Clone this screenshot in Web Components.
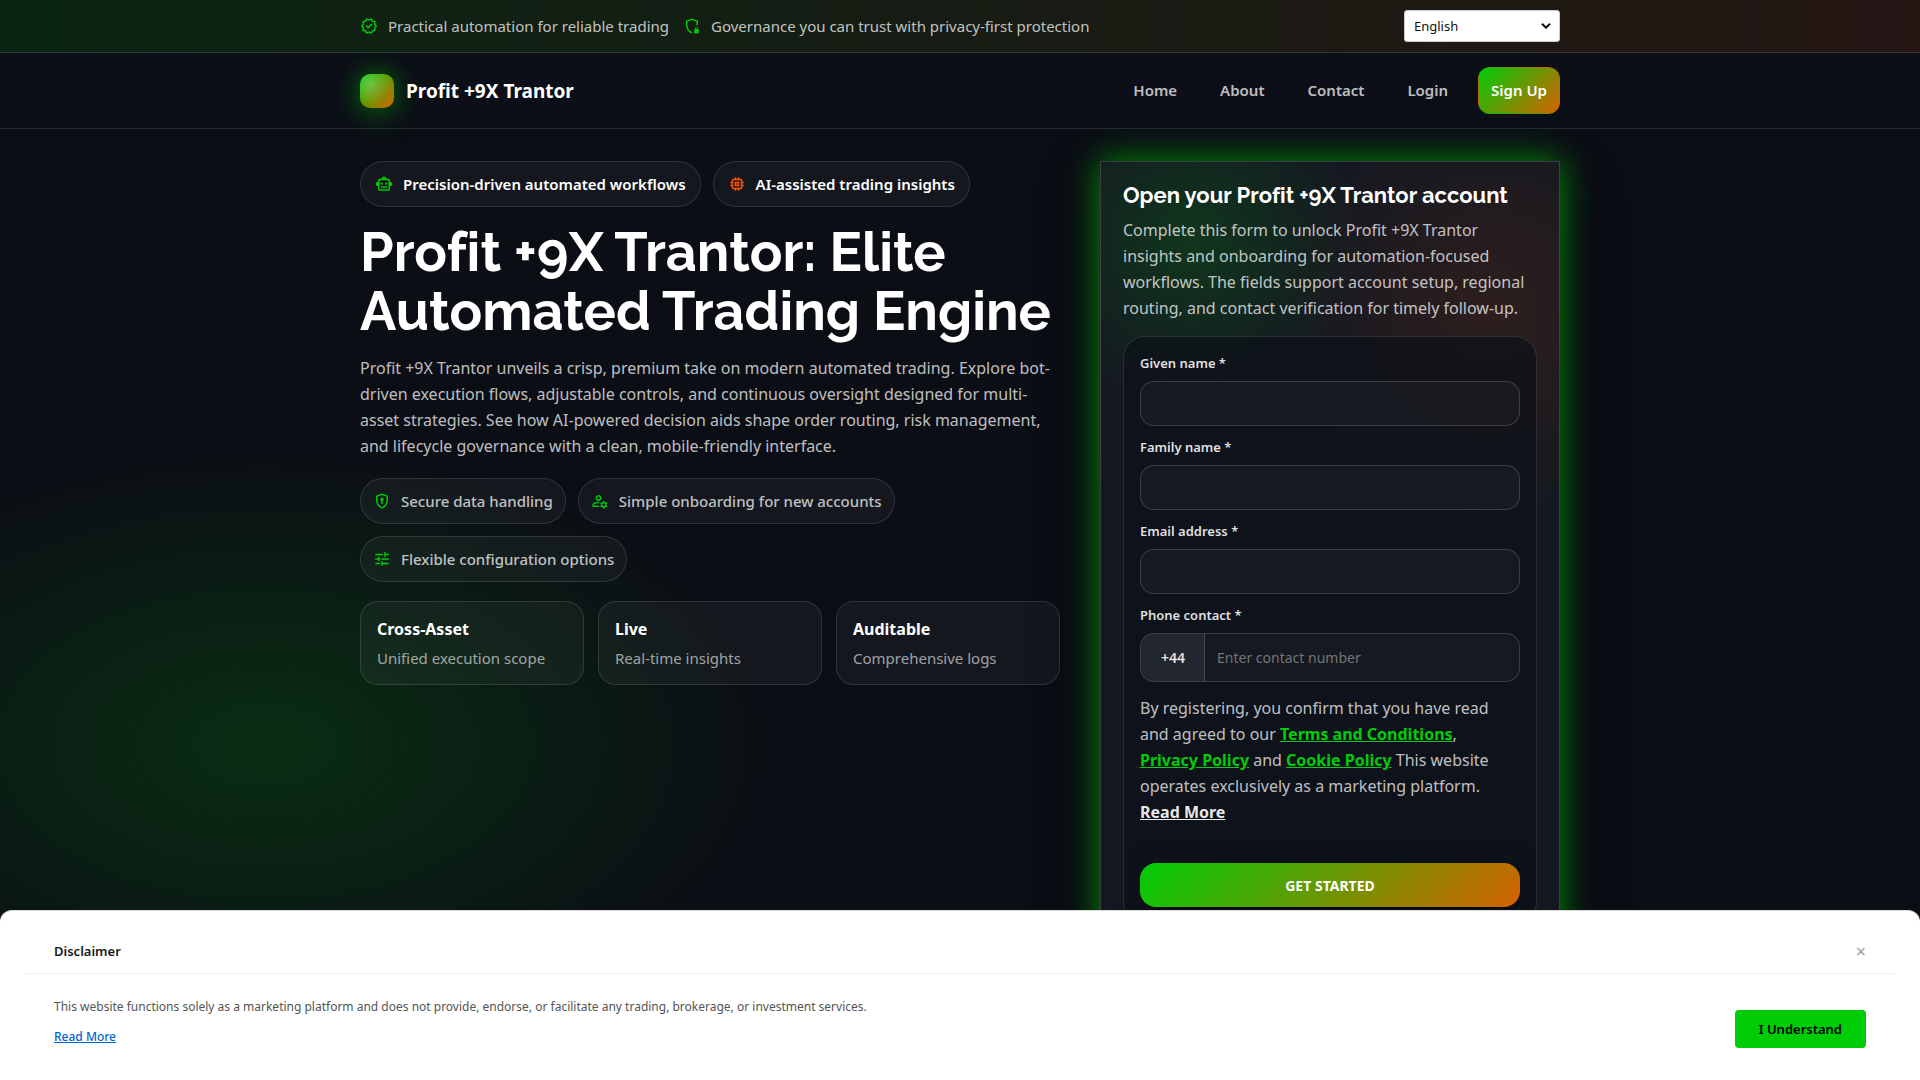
<!DOCTYPE html>
<html lang="en">
<head>
<meta charset="utf-8">
<title>Profit +9X Trantor</title>
<style>
  :root {
    --green: #00cc07;
    --orange: #ff5200;
    --grad: linear-gradient(135deg, #00cc07, #d46200);
    --line: rgba(255, 255, 255, .12);
    --panel: rgba(255, 255, 255, .04);
    --text: rgba(255, 255, 255, .74);
    --heading: Raleway, Lato, sans-serif;
  }
  * { box-sizing: border-box; }
  body {
    margin: 0;
    min-height: 100vh;
    overflow: hidden;
    background: #0b0e15;
    color: var(--text);
    font: 16px/26px "Noto Sans", sans-serif;
  }
</style>
</head>
<body>
<page-app></page-app>

<script>
const base = /*css*/`
  * { box-sizing: border-box; }
  a { color: inherit; text-decoration: none; }
  h1, h2, p { margin: 0; }
`

const icons = {
  verified: '<path d="m8.6 22.5-1.9-3.2-3.6-.8.35-3.7L1 12l2.45-2.8L3.1 5.5l3.6-.8 1.9-3.2L12 2.950l3.400-1.450 1.900 3.200 3.600.8-.35 3.700L23 12l-2.450 2.800.35 3.700-3.600.8-1.900 3.200-3.400-1.450Zm.85-2.550 2.550-1.100 2.600 1.100 1.400-2.400 2.750-.65-.25-2.800 1.850-2.100-1.850-2.150.25-2.800-2.750-.6-1.450-2.400L12 5.150l-2.600-1.100L8 6.450l-2.750.6.25 2.800L3.650 12l1.850 2.100-.25 2.850 2.750.6Zm1.500-4.400L16.600 9.900l-1.400-1.450-4.250 4.250-2.150-2.100L7.400 12Z"/>',
  shieldLock: '<path d="M12 22q-3.475-.875-5.737-3.988T4 11.100V5l8-3 8 3v6h-2V6.375l-6-2.250-6 2.250V11.100q0 3.025 1.700 5.500T12 19.900Zm4 0q-.425 0-.712-.288T15 21v-4q0-.425.288-.712T16 16v-1q0-.825.588-1.412T18 13t1.413.588T20 15v1q.425 0 .713.288T21 17v4q0 .425-.287.713T20 22Zm1-6h2v-1q0-.425-.287-.712T18 14t-.712.288T17 15Z"/>',
  robot: '<path d="M4 15q-1.250 0-2.125-.875T1 12t.875-2.125T4 9V7q0-.825.588-1.412T6 5h3q0-1.250.875-2.125T12 2t2.125.875T15 5h3q.825 0 1.413.588T20 7v2q1.250 0 2.125.875T23 12t-.875 2.125T20 15v4q0 .825-.587 1.413T18 21H6q-.825 0-1.412-.587T4 19ZM6 19h12V7H6Zm3-6q-.625 0-1.062-.437T7.500 11.500t.438-1.062T9 10t1.063.438.437 1.062-.437 1.063T9 13Zm6 0q-.625 0-1.062-.437T13.500 11.500t.438-1.062T15 10t1.063.438.437 1.062-.437 1.063T15 13Zm-7 4v-2h8v2Z"/>',
  chip: '<path d="M9 15V9h6v6Zm2-2h2v-2h-2Zm-2 8v-2H7q-.825 0-1.412-.587T5 17v-2H3v-2h2v-2H3V9h2V7q0-.825.588-1.412T7 5h2V3h2v2h2V3h2v2h2q.825 0 1.413.588T19 7v2h2v2h-2v2h2v2h-2v2q0 .825-.587 1.413T17 19h-2v2h-2v-2h-2v2Zm8-4V7H7v10Z"/>',
  shieldKey: '<path d="M12 22q-3.475-.875-5.737-3.988T4 11.100V5l8-3 8 3v6.100q0 3.800-2.262 6.913T12 22Zm0-2.100q2.600-.825 4.300-3.300t1.700-5.500V6.375l-6-2.250-6 2.250V11.100q0 3.025 1.700 5.500t4.300 3.300ZM11 16v-4.300A2.200 2.200 0 1 1 13 11.700V16Z"/>',
  userCog: '<path d="M10 12q-1.650 0-2.825-1.175T6 8t1.175-2.825T10 4t2.825 1.175T14 8t-1.175 2.825T10 12Zm-8 8v-2.800q0-.85.425-1.562T3.600 14.550Q5.100 13.800 6.888 13.400T10 13h.700q-.4 1-.55 2H10q-1.750 0-3.150.437T4.500 16.350Q4 16.650 4 17.200v.8h6.300q.2 1 .8 2Zm8-10q.825 0 1.413-.587T12 8t-.587-1.412T10 6t-1.412.588T8 8t.588 1.413T10 10Zm6 12-.3-1.500q-.6-.25-1-.55l-1.450.45-1-1.700L13.400 17.700q-.1-.6 0-1.300l-1.150-1 1-1.700 1.450.45q.5-.4 1-.55L16 12h2l.3 1.600q.5.200 1 .55l1.450-.45 1 1.750-1.150 1q.1.600 0 1.250l1.150 1-1 1.700-1.450-.45q-.4.300-1 .55L18 22Zm1-3q.825 0 1.413-.587T19 17t-.587-1.412T17 15t-1.412.588T15 17t.588 1.413T17 19Z"/>',
  tune: '<path d="M11 21v-6h2v2h8v2h-8v2Zm-8-2v-2h6v2Zm4-4v-2H3v-2h4V9h2v6Zm4-2v-2h10v2Zm4-4V3h2v2h4v2h-4v2ZM3 7V5h10v2Z"/>'
}

function define(name, css, html) {
  customElements.define(name, class extends HTMLElement {
    constructor() {
      super()
      this.attachShadow({ mode: 'open' })
      this.shadowRoot.innerHTML = `<style>${base}${css}</style>${typeof html === 'function' ? html(this) : html}`
    }
  })
}

define('app-icon', /*css*/`
  :host { display: block; flex: none; width: 18px; height: 18px; color: var(--green); }
  svg { display: block; width: 100%; height: 100%; fill: currentColor; }
`, el => `<svg viewBox="0 0 24 24" aria-hidden="true">${icons[el.getAttribute('name')]}</svg>`)

define('language-select', /*css*/`
  :host { display: grid; align-items: center; width: 156px; }
  select, svg { grid-area: 1 / 1; }
  select {
    width: 100%; height: 32px; padding: 0 9px; appearance: none;
    border: 1px solid #ccc; border-radius: 3px;
    background: #fff; color: #111; font: 13px "Noto Sans", sans-serif;
  }
  svg {
    justify-self: end; width: 10px; height: 6px; margin-right: 9px;
    fill: none; stroke: #111; stroke-width: 2; pointer-events: none;
  }
`, /*html*/`
  <select aria-label="Language"><option>English</option></select>
  <svg viewBox="0 0 10 6" aria-hidden="true"><path d="m1 .7 4 4 4-4"/></svg>
`)

define('top-bar', /*css*/`
  :host {
    display: block;
    border-bottom: 1px solid var(--line);
    background: linear-gradient(90deg, rgba(0, 204, 7, .12), rgba(255, 82, 0, .1));
  }
  .row {
    display: flex; align-items: center; justify-content: space-between;
    max-width: 1200px; margin: 0 auto; padding: 10px 0;
  }
  .notes { display: flex; gap: 14px; font-size: 15px; line-height: 24px; }
  .note { display: flex; align-items: center; gap: 10px; }
`, /*html*/`
  <div class="row">
    <div class="notes">
      <span class="note"><app-icon name="verified"></app-icon>Practical automation for reliable trading</span>
      <span class="note"><app-icon name="shieldLock"></app-icon>Governance you can trust with privacy-first protection</span>
    </div>
    <language-select></language-select>
  </div>
`)

define('site-header', /*css*/`
  :host {
    display: block;
    border-bottom: 1px solid var(--line);
    background: rgba(13, 17, 25, .6);
  }
  .row {
    display: flex; align-items: center; justify-content: space-between;
    max-width: 1200px; margin: 0 auto; padding: 14px 0;
  }
  .brand {
    display: flex; align-items: center; gap: 12px;
    color: #fff; font-size: 19px; font-weight: 700;
  }
  .mark {
    width: 34px; height: 34px; border-radius: 10px;
    background: radial-gradient(circle at 30% 30%, rgba(255, 255, 255, .25), transparent 60%), var(--grad);
    box-shadow: 0 0 26px rgba(0, 204, 7, .5), 0 10px 40px rgba(0, 204, 7, .15);
  }
  nav { display: flex; align-items: center; gap: 17px; font-size: 15px; font-weight: 600; }
  nav a { padding: 10px 12px; border: 1px solid transparent; border-radius: 12px; line-height: 25px; }
  nav a.cta { background: var(--grad); color: #fff; }
`, /*html*/`
  <div class="row">
    <a class="brand" href="#"><span class="mark"></span>Profit +9X Trantor</a>
    <nav>
      <a href="#">Home</a><a href="#">About</a><a href="#">Contact</a><a href="#">Login</a>
      <a class="cta" href="#">Sign Up</a>
    </nav>
  </div>
`)

define('info-pill', /*css*/`
  :host {
    display: flex; align-items: center; gap: 10px; padding: 10px 12px;
    border: 1px solid var(--line); border-radius: 23px;
    background: var(--panel);
    font-size: 15px; font-weight: 500; line-height: 24px;
  }
  :host([strong]) { padding: 10px 14px; color: #fff; font-weight: 600; }
`, el => `<app-icon name="${el.getAttribute('icon')}" style="color: var(--${el.getAttribute('tone') || 'green'})"></app-icon><span><slot></slot></span>`)

define('stat-card', /*css*/`
  :host {
    display: block; padding: 14px 16px;
    border: 1px solid var(--line); border-radius: 18px;
    background: var(--panel);
  }
  strong { display: block; color: #fff; font-size: 16px; line-height: 26px; }
  p { margin-top: 4px; color: rgba(255, 255, 255, .6); font-size: 15px; line-height: 24px; }
`, el => `<strong>${el.getAttribute('value')}</strong><p><slot></slot></p>`)

define('hero-intro', /*css*/`
  :host { display: block; }
  .pills { display: flex; flex-wrap: wrap; gap: 12px; }
  h1 {
    margin: 16px 0 14px; color: #fff;
    font: 700 54px/59px var(--heading);
    font-variant-ligatures: none;
  }
  .pills.small { margin: 19px 0; }
  .stats { display: grid; grid-template-columns: repeat(3, 1fr); gap: 14px; }
`, /*html*/`
  <div class="pills">
    <info-pill strong icon="robot">Precision-driven automated workflows</info-pill>
    <info-pill strong icon="chip" tone="orange">AI-assisted trading insights</info-pill>
  </div>
  <h1>Profit +9X Trantor: Elite Automated Trading Engine</h1>
  <p>Profit +9X Trantor unveils a crisp, premium take on modern automated trading. Explore bot-driven execution flows, adjustable controls, and continuous oversight designed for multi-asset strategies. See how AI-powered decision aids shape order routing, risk management, and lifecycle governance with a clean, mobile-friendly interface.</p>
  <div class="pills small">
    <info-pill icon="shieldKey">Secure data handling</info-pill>
    <info-pill icon="userCog">Simple onboarding for new accounts</info-pill>
    <info-pill icon="tune">Flexible configuration options</info-pill>
  </div>
  <div class="stats">
    <stat-card value="Cross-Asset">Unified execution scope</stat-card>
    <stat-card value="Live">Real-time insights</stat-card>
    <stat-card value="Auditable">Comprehensive logs</stat-card>
  </div>
`)

define('form-field', /*css*/`
  :host { display: block; }
  label { display: block; margin-bottom: 7px; color: rgba(255, 255, 255, .88); font-size: 13px; font-weight: 600; line-height: 21px; }
  .box {
    display: flex; overflow: hidden;
    border: 1px solid rgba(255, 255, 255, .16); border-radius: 14px;
    background: rgba(255, 255, 255, .03);
  }
  .code {
    display: flex; align-items: center; padding: 0 19px 0 20px;
    border-right: 1px solid rgba(255, 255, 255, .16);
    background: rgba(255, 255, 255, .06);
    color: rgba(255, 255, 255, .9); font-size: 14px; font-weight: 600;
  }
  input {
    flex: 1; min-width: 0; height: 43px; padding: 0 12px;
    border: 0; outline: 0; background: none; color: #fff;
    font: 14px "Noto Sans", sans-serif;
  }
  .code + input { height: 47px; }
  input::placeholder { color: #757575; }
`, el => {
  const code = el.getAttribute('code')
  return /*html*/`
    <label for="field">${el.getAttribute('label')} *</label>
    <div class="box">
      ${code ? `<span class="code">${code}</span>` : ''}
      <input id="field" type="${el.getAttribute('type') || 'text'}" placeholder="${el.getAttribute('placeholder') || ''}">
    </div>
  `
})

define('signup-card', /*css*/`
  :host {
    display: block; padding: 20px 22px;
    border: 1px solid rgba(255, 255, 255, .16);
    background:
      radial-gradient(circle 240px at 20% 80px, rgba(0, 204, 7, .17), transparent 70%),
      radial-gradient(circle 300px at 85% 150px, rgba(255, 82, 0, .11), transparent 70%),
      #141821;
    box-shadow: 0 0 32px rgba(0, 204, 7, .7), 0 18px 60px rgba(0, 0, 0, .45);
  }
  h2 { color: #fff; font: 700 22px/26px var(--heading); font-variant-ligatures: none; }
  .lead { margin: 9px 0 15px; }
  form {
    display: grid; gap: 11px; padding: 16px;
    border: 1px solid var(--line); border-radius: 22px;
    background: rgba(13, 17, 24, .72);
  }
  .legal { margin-top: 2px; }
  .legal a { color: var(--green); font-weight: 700; text-decoration: underline; white-space: nowrap; }
  .legal a.more { color: rgba(255, 255, 255, .92); }
  button {
    height: 44px; margin-top: 27px; border: 0; border-radius: 16px;
    background: var(--grad); color: #fff;
    box-shadow: 0 8px 28px rgba(0, 0, 0, .35);
    font: 700 14px "Noto Sans", sans-serif;
  }
`, /*html*/`
  <h2>Open your Profit +9X Trantor account</h2>
  <p class="lead">Complete this form to unlock Profit +9X Trantor insights and onboarding for automation-focused workflows. The fields support account setup, regional routing, and contact verification for timely follow-up.</p>
  <form>
    <form-field label="Given name"></form-field>
    <form-field label="Family name"></form-field>
    <form-field label="Email address" type="email"></form-field>
    <form-field label="Phone contact" type="tel" code="+44" placeholder="Enter contact number"></form-field>
    <p class="legal">By registering, you confirm that you have read and agreed to our <a href="#">Terms and Conditions</a>, <a href="#">Privacy Policy</a> and <a href="#">Cookie Policy</a> This website operates exclusively as a marketing platform. <a class="more" href="#">Read More</a></p>
    <button type="button">GET STARTED</button>
  </form>
`)

define('disclaimer-bar', /*css*/`
  :host {
    display: block; position: fixed; left: 0; right: 0; bottom: 0;
    padding: 20px 25px 32px;
    border-top: 1px solid #ddd; border-radius: 12px 12px 0 0;
    background: #fff; color: #555; font-size: 12px; line-height: 20px;
  }
  header {
    display: flex; align-items: center; justify-content: space-between;
    padding: 10px 29px 11px; border-bottom: 1px solid #eee;
  }
  h2 { color: #1a1a1a; font-size: 13px; font-weight: 600; line-height: 21px; }
  .close { padding: 0; border: 0; background: none; color: #999; font: 18px/21px "Noto Sans", sans-serif; }
  .body { display: flex; align-items: flex-end; justify-content: space-between; padding: 23px 29px 0; }
  .body a { display: inline-block; margin-top: 10px; color: #0066cc; font-weight: 500; text-decoration: underline; }
  .text { padding-bottom: 1px; }
  .ok {
    height: 38px; padding: 0 24px; border: 0; border-radius: 4px;
    background: #00cc07; color: #000; font: 600 13px "Noto Sans", sans-serif;
  }
`, /*html*/`
  <header><h2>Disclaimer</h2><button class="close" type="button" aria-label="Close">×</button></header>
  <div class="body">
    <div class="text">
      <p>This website functions solely as a marketing platform and does not provide, endorse, or facilitate any trading, brokerage, or investment services.</p>
      <a href="#">Read More</a>
    </div>
    <button class="ok" type="button">I Understand</button>
  </div>
`)

define('page-app', /*css*/`
  :host {
    display: block; height: 100vh; overflow: hidden;
    background: radial-gradient(520px 300px at 265px 745px, rgba(0, 204, 7, .17), transparent 100%), #0b0e15;
  }
  main {
    display: grid; grid-template-columns: minmax(0, 700px) minmax(0, 460px); gap: 40px;
    align-items: start; max-width: 1200px; margin: 0 auto; padding: 32px 0;
  }
`, /*html*/`
  <top-bar></top-bar>
  <site-header></site-header>
  <main>
    <hero-intro></hero-intro>
    <signup-card></signup-card>
  </main>
  <disclaimer-bar></disclaimer-bar>
`)
</script>
</body>
</html>
